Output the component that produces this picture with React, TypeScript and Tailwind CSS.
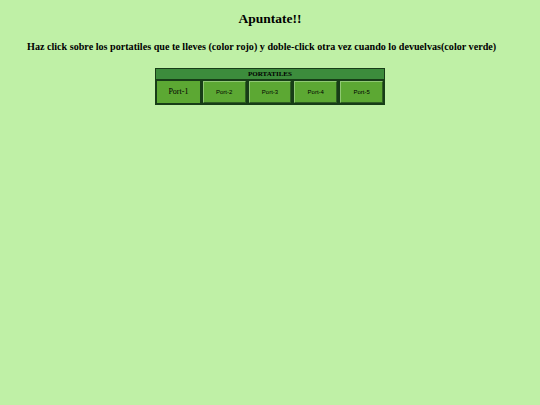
export default function App() {
  const ports = ['Port-1', 'Port-2', 'Port-3', 'Port-4', 'Port-5'];

  return (
    <div className="min-h-[405px] w-full bg-[#bff0a6] font-['Liberation_Serif',serif] text-black">
      <h1 className="pt-[10px] text-center text-[13.5px] font-bold leading-[18px]">Apuntate!!</h1>
      <p className="mt-[13px] pl-[27px] text-[10.15px] font-bold leading-[12px]">
        Haz click sobre los portatiles que te lleves (color rojo) y doble-click otra vez cuando lo devuelvas(color verde)
      </p>
      <div className="mt-[15px] flex justify-center">
        <div className="w-[230px] border border-[#173d17] bg-[#173d17]">
          <div className="h-[10px] bg-[#3c8c3c] text-center text-[7px] font-bold leading-[10px]">PORTATILES</div>
          <div className="mt-[1px] flex gap-[1px]">
            {ports.map((p, i) =>
              i === 0 ? (
                <div
                  key={p}
                  className="flex h-[24px] flex-1 items-center justify-center border border-[#173d17] bg-[#5ca833] text-[8px]"
                >
                  {p}
                </div>
              ) : (
                <div key={p} className="flex h-[24px] flex-1 border border-[#173d17]">
                  <div className="flex flex-1 items-center justify-center border-[1.5px] border-t-[#8fc873] border-l-[#8fc873] border-b-[#2f5f22] border-r-[#2f5f22] bg-[#5ca833] font-['Liberation_Sans',sans-serif] text-[6px]">
                    {p}
                  </div>
                </div>
              )
            )}
          </div>
        </div>
      </div>
    </div>
  );
}
